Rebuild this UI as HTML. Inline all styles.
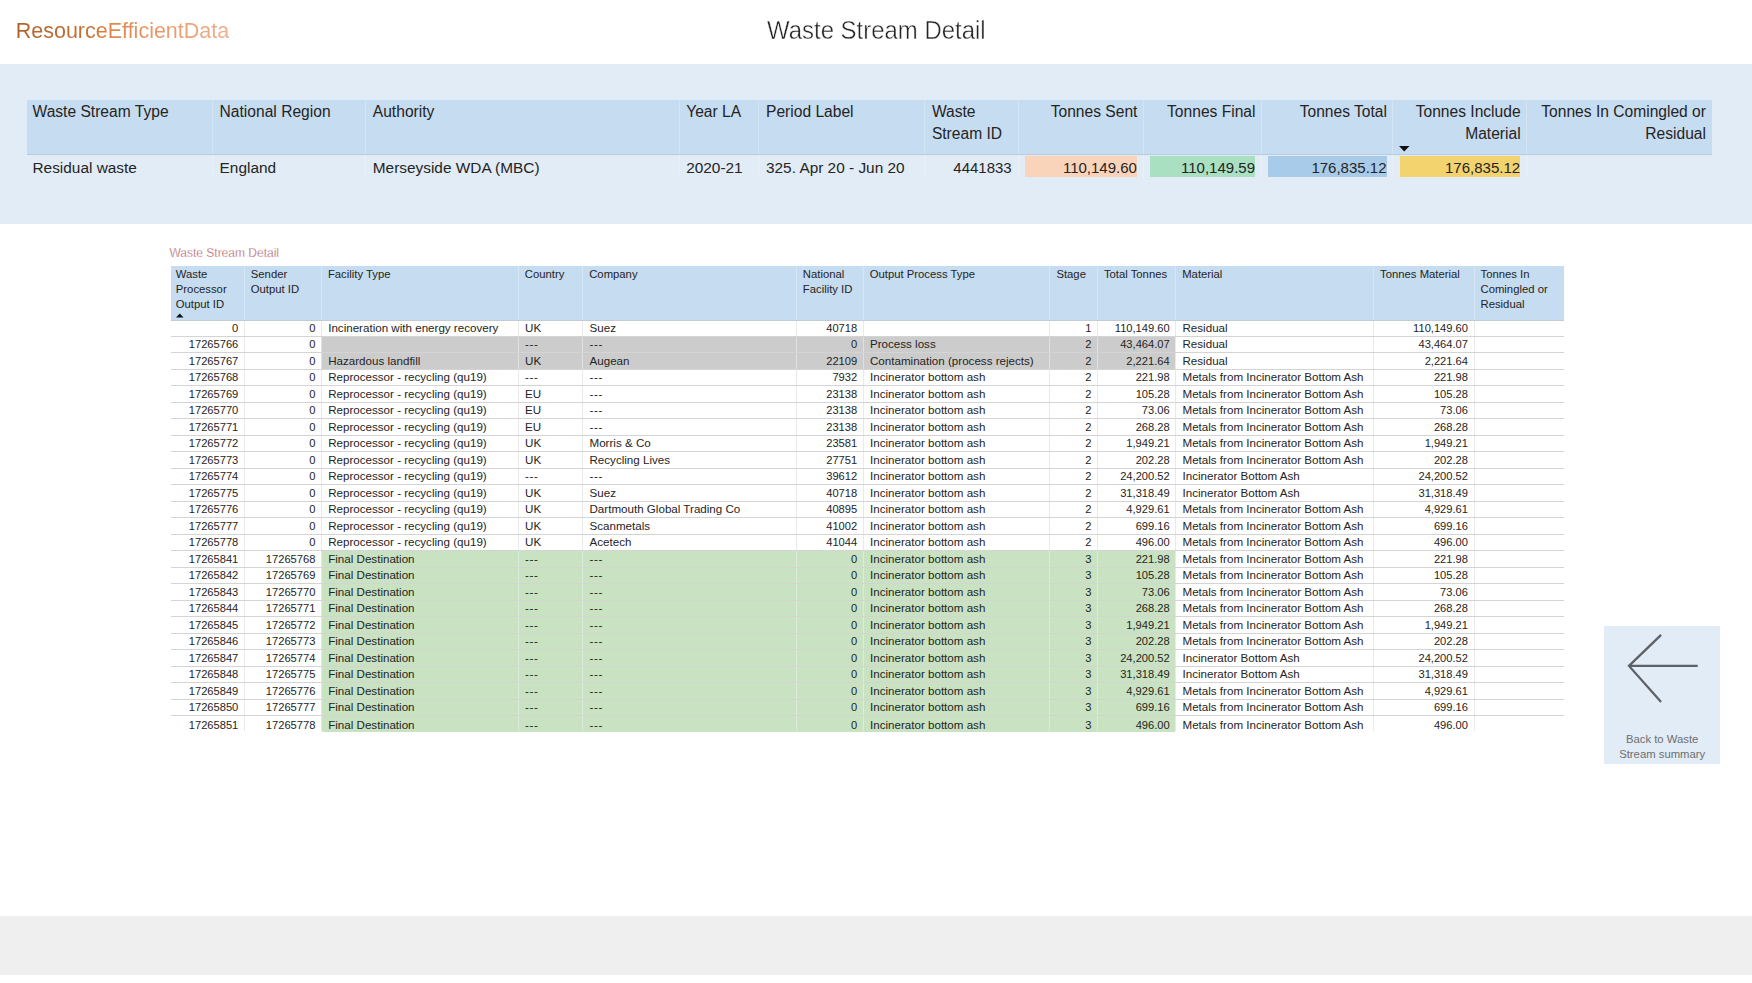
<!DOCTYPE html>
<html><head><meta charset="utf-8"><title>Waste Stream Detail</title>
<style>
html,body{margin:0;padding:0;}
body{width:1752px;height:983px;position:relative;overflow:hidden;background:#fff;font-family:"Liberation Sans", sans-serif;}
body>div{position:absolute;}
.t{white-space:nowrap;line-height:1;}
</style></head><body>
<div class="t" style="left:15.70px;top:21.00px;font-size:21.5px;color:#252423;background:linear-gradient(90deg,#b0612a 0%,#c77236 35%,#e3864c 45%,#e99a6c 70%,#ebb08e 100%);-webkit-background-clip:text;background-clip:text;color:transparent;">ResourceEfficientData</div>
<div class="t" style="left:766.80px;top:18.00px;font-size:25.5px;color:#252423;transform-origin:0 0;transform:scaleX(0.939);-webkit-text-stroke:0.45px #fff;">Waste Stream Detail</div>
<div style="left:0.00px;top:64.00px;width:1752.00px;height:160.00px;background:#e1ecf7;"></div>
<div style="left:27.00px;top:100.00px;width:1685.00px;height:55.00px;background:#c6dcf0;"></div>
<div style="left:27.00px;top:154.00px;width:1685.00px;height:1.00px;background:#b9cadb;"></div>
<div class="t" style="left:32.50px;top:104.00px;font-size:15.6px;color:#252423;">Waste Stream Type</div>
<div class="t" style="left:219.60px;top:104.00px;font-size:15.6px;color:#252423;">National Region</div>
<div class="t" style="left:372.80px;top:104.00px;font-size:15.6px;color:#252423;">Authority</div>
<div class="t" style="left:686.20px;top:104.00px;font-size:15.6px;color:#252423;">Year LA</div>
<div class="t" style="left:766.00px;top:104.00px;font-size:15.6px;color:#252423;">Period Label</div>
<div class="t" style="left:931.90px;top:104.00px;font-size:15.6px;color:#252423;">Waste</div>
<div class="t" style="left:931.90px;top:126.00px;font-size:15.6px;color:#252423;">Stream ID</div>
<div class="t" style="right:614.60px;top:104.00px;font-size:15.6px;color:#252423;">Tonnes Sent</div>
<div class="t" style="right:496.50px;top:104.00px;font-size:15.6px;color:#252423;">Tonnes Final</div>
<div class="t" style="right:365.00px;top:104.00px;font-size:15.6px;color:#252423;">Tonnes Total</div>
<div class="t" style="right:231.40px;top:104.00px;font-size:15.6px;color:#252423;">Tonnes Include</div>
<div class="t" style="right:231.40px;top:126.00px;font-size:15.6px;color:#252423;">Material</div>
<div class="t" style="right:46.00px;top:104.00px;font-size:15.6px;color:#252423;">Tonnes In Comingled or</div>
<div class="t" style="right:46.00px;top:126.00px;font-size:15.6px;color:#252423;">Residual</div>
<div class="t" style="left:32.50px;top:160.00px;font-size:15.4px;color:#252423;">Residual waste</div>
<div class="t" style="left:219.60px;top:160.00px;font-size:15.4px;color:#252423;">England</div>
<div class="t" style="left:372.80px;top:160.00px;font-size:15.4px;color:#252423;">Merseyside WDA (MBC)</div>
<div class="t" style="left:686.20px;top:160.00px;font-size:15.4px;color:#252423;">2020-21</div>
<div class="t" style="left:766.00px;top:160.00px;font-size:15.4px;color:#252423;">325. Apr 20 - Jun 20</div>
<div class="t" style="right:740.30px;top:160.00px;font-size:15px;color:#252423;">4441833</div>
<div style="left:1025.00px;top:156.00px;width:112.00px;height:21.00px;background:#f9d4bb;"></div>
<div class="t" style="right:615.10px;top:160.00px;font-size:15px;color:#252423;">110,149.60</div>
<div style="left:1150.00px;top:156.00px;width:105.00px;height:21.00px;background:#a8e0c1;"></div>
<div class="t" style="right:497.00px;top:160.00px;font-size:15px;color:#252423;">110,149.59</div>
<div style="left:1268.00px;top:156.00px;width:119.00px;height:21.00px;background:#a9cbea;"></div>
<div class="t" style="right:365.50px;top:160.00px;font-size:15px;color:#252423;">176,835.12</div>
<div style="left:1400.00px;top:156.00px;width:120.00px;height:21.00px;background:#f2d36e;"></div>
<div class="t" style="right:231.90px;top:160.00px;font-size:15px;color:#252423;">176,835.12</div>
<div class="t" style="right:46.50px;top:160.00px;font-size:15px;color:#252423;"></div>
<div style="left:212.00px;top:100.00px;width:1.00px;height:54.00px;background:#d3e4f3;"></div>
<div style="left:212.00px;top:155.00px;width:1.00px;height:23.00px;background:#e8f0f8;"></div>
<div style="left:365.00px;top:100.00px;width:1.00px;height:54.00px;background:#d3e4f3;"></div>
<div style="left:365.00px;top:155.00px;width:1.00px;height:23.00px;background:#e8f0f8;"></div>
<div style="left:679.00px;top:100.00px;width:1.00px;height:54.00px;background:#d3e4f3;"></div>
<div style="left:679.00px;top:155.00px;width:1.00px;height:23.00px;background:#e8f0f8;"></div>
<div style="left:758.00px;top:100.00px;width:1.00px;height:54.00px;background:#d3e4f3;"></div>
<div style="left:758.00px;top:155.00px;width:1.00px;height:23.00px;background:#e8f0f8;"></div>
<div style="left:924.00px;top:100.00px;width:1.00px;height:54.00px;background:#d3e4f3;"></div>
<div style="left:924.00px;top:155.00px;width:1.00px;height:23.00px;background:#e8f0f8;"></div>
<div style="left:1018.00px;top:100.00px;width:1.00px;height:54.00px;background:#d3e4f3;"></div>
<div style="left:1018.00px;top:155.00px;width:1.00px;height:23.00px;background:#e8f0f8;"></div>
<div style="left:1143.00px;top:100.00px;width:1.00px;height:54.00px;background:#d3e4f3;"></div>
<div style="left:1143.00px;top:155.00px;width:1.00px;height:23.00px;background:#e8f0f8;"></div>
<div style="left:1261.00px;top:100.00px;width:1.00px;height:54.00px;background:#d3e4f3;"></div>
<div style="left:1261.00px;top:155.00px;width:1.00px;height:23.00px;background:#e8f0f8;"></div>
<div style="left:1392.00px;top:100.00px;width:1.00px;height:54.00px;background:#d3e4f3;"></div>
<div style="left:1392.00px;top:155.00px;width:1.00px;height:23.00px;background:#e8f0f8;"></div>
<div style="left:1526.00px;top:100.00px;width:1.00px;height:54.00px;background:#d3e4f3;"></div>
<div style="left:1526.00px;top:155.00px;width:1.00px;height:23.00px;background:#e8f0f8;"></div>
<svg style="position:absolute;left:1399px;top:145.5px" width="11" height="6"><path d="M0 0H10.5L5.25 5.5Z" fill="#111"/></svg>
<div class="t" style="left:169.40px;top:247.00px;font-size:12px;color:#a84c55;-webkit-text-stroke:0.3px #fff;">Waste Stream Detail</div>
<div style="left:171.00px;top:266.00px;width:1393.00px;height:55.00px;background:#c6dcf0;"></div>
<div style="left:171.00px;top:320.00px;width:1393.00px;height:1.00px;background:#c3cbd3;"></div>
<div class="t" style="left:175.80px;top:269.00px;font-size:11.3px;color:#252423;">Waste</div>
<div class="t" style="left:175.80px;top:284.00px;font-size:11.3px;color:#252423;">Processor</div>
<div class="t" style="left:175.80px;top:299.00px;font-size:11.3px;color:#252423;">Output ID</div>
<div class="t" style="left:250.80px;top:269.00px;font-size:11.3px;color:#252423;">Sender</div>
<div class="t" style="left:250.80px;top:284.00px;font-size:11.3px;color:#252423;">Output ID</div>
<div class="t" style="left:327.90px;top:269.00px;font-size:11.3px;color:#252423;">Facility Type</div>
<div class="t" style="left:524.80px;top:269.00px;font-size:11.3px;color:#252423;">Country</div>
<div class="t" style="left:589.20px;top:269.00px;font-size:11.3px;color:#252423;">Company</div>
<div class="t" style="left:802.80px;top:269.00px;font-size:11.3px;color:#252423;">National</div>
<div class="t" style="left:802.80px;top:284.00px;font-size:11.3px;color:#252423;">Facility ID</div>
<div class="t" style="left:869.70px;top:269.00px;font-size:11.3px;color:#252423;">Output Process Type</div>
<div class="t" style="left:1056.40px;top:269.00px;font-size:11.3px;color:#252423;">Stage</div>
<div class="t" style="left:1103.90px;top:269.00px;font-size:11.3px;color:#252423;">Total Tonnes</div>
<div class="t" style="left:1182.20px;top:269.00px;font-size:11.3px;color:#252423;">Material</div>
<div class="t" style="left:1380.10px;top:269.00px;font-size:11.3px;color:#252423;">Tonnes Material</div>
<div class="t" style="left:1480.50px;top:269.00px;font-size:11.3px;color:#252423;">Tonnes In</div>
<div class="t" style="left:1480.50px;top:284.00px;font-size:11.3px;color:#252423;">Comingled or</div>
<div class="t" style="left:1480.50px;top:299.00px;font-size:11.3px;color:#252423;">Residual</div>
<div style="left:244.00px;top:266.00px;width:1.00px;height:54.00px;background:#d6e6f4;"></div>
<div style="left:321.00px;top:266.00px;width:1.00px;height:54.00px;background:#d6e6f4;"></div>
<div style="left:518.00px;top:266.00px;width:1.00px;height:54.00px;background:#d6e6f4;"></div>
<div style="left:582.00px;top:266.00px;width:1.00px;height:54.00px;background:#d6e6f4;"></div>
<div style="left:796.00px;top:266.00px;width:1.00px;height:54.00px;background:#d6e6f4;"></div>
<div style="left:863.00px;top:266.00px;width:1.00px;height:54.00px;background:#d6e6f4;"></div>
<div style="left:1049.00px;top:266.00px;width:1.00px;height:54.00px;background:#d6e6f4;"></div>
<div style="left:1097.00px;top:266.00px;width:1.00px;height:54.00px;background:#d6e6f4;"></div>
<div style="left:1175.00px;top:266.00px;width:1.00px;height:54.00px;background:#d6e6f4;"></div>
<div style="left:1373.00px;top:266.00px;width:1.00px;height:54.00px;background:#d6e6f4;"></div>
<div style="left:1474.00px;top:266.00px;width:1.00px;height:54.00px;background:#d6e6f4;"></div>
<svg style="position:absolute;left:175.5px;top:313px" width="8" height="5"><path d="M0 4.5H7.5L3.75 0.5Z" fill="#111"/></svg>
<div style="left:171.00px;top:321.00px;width:1393.00px;height:16.00px;background:#ffffff;"></div>
<div class="t" style="right:1513.70px;top:323.00px;font-size:11.15px;color:#252423;">0</div>
<div class="t" style="right:1436.60px;top:323.00px;font-size:11.15px;color:#252423;">0</div>
<div class="t" style="left:328.20px;top:322.00px;font-size:11.6px;color:#252423;">Incineration with energy recovery</div>
<div class="t" style="left:525.10px;top:322.00px;font-size:11.6px;color:#252423;">UK</div>
<div class="t" style="left:589.50px;top:322.00px;font-size:11.6px;color:#252423;">Suez</div>
<div class="t" style="right:894.80px;top:323.00px;font-size:11.15px;color:#252423;">40718</div>
<div class="t" style="right:660.60px;top:323.00px;font-size:11.15px;color:#252423;">1</div>
<div class="t" style="right:582.30px;top:323.00px;font-size:11.15px;color:#252423;">110,149.60</div>
<div class="t" style="left:1182.50px;top:322.00px;font-size:11.6px;color:#252423;">Residual</div>
<div class="t" style="right:284.00px;top:323.00px;font-size:11.15px;color:#252423;">110,149.60</div>
<div style="left:171.00px;top:336.00px;width:1393.00px;height:1.00px;background:#d4d4d4;"></div>
<div style="left:244.00px;top:321.00px;width:1.00px;height:15.00px;background:#e9e9e9;"></div>
<div style="left:321.00px;top:321.00px;width:1.00px;height:15.00px;background:#e9e9e9;"></div>
<div style="left:518.00px;top:321.00px;width:1.00px;height:15.00px;background:#e9e9e9;"></div>
<div style="left:582.00px;top:321.00px;width:1.00px;height:15.00px;background:#e9e9e9;"></div>
<div style="left:796.00px;top:321.00px;width:1.00px;height:15.00px;background:#e9e9e9;"></div>
<div style="left:863.00px;top:321.00px;width:1.00px;height:15.00px;background:#e9e9e9;"></div>
<div style="left:1049.00px;top:321.00px;width:1.00px;height:15.00px;background:#e9e9e9;"></div>
<div style="left:1097.00px;top:321.00px;width:1.00px;height:15.00px;background:#e9e9e9;"></div>
<div style="left:1175.00px;top:321.00px;width:1.00px;height:15.00px;background:#e9e9e9;"></div>
<div style="left:1373.00px;top:321.00px;width:1.00px;height:15.00px;background:#e9e9e9;"></div>
<div style="left:1474.00px;top:321.00px;width:1.00px;height:15.00px;background:#e9e9e9;"></div>
<div style="left:171.00px;top:337.00px;width:1393.00px;height:16.00px;background:#ffffff;"></div>
<div style="left:322.00px;top:337.00px;width:853.00px;height:16.00px;background:#cccccc;"></div>
<div class="t" style="right:1513.70px;top:339.00px;font-size:11.15px;color:#252423;">17265766</div>
<div class="t" style="right:1436.60px;top:339.00px;font-size:11.15px;color:#252423;">0</div>
<div class="t" style="left:525.10px;top:338.00px;font-size:11.6px;color:#252423;letter-spacing:0.6px;">---</div>
<div class="t" style="left:589.50px;top:338.00px;font-size:11.6px;color:#252423;letter-spacing:0.6px;">---</div>
<div class="t" style="right:894.80px;top:339.00px;font-size:11.15px;color:#252423;">0</div>
<div class="t" style="left:870.00px;top:338.00px;font-size:11.6px;color:#252423;">Process loss</div>
<div class="t" style="right:660.60px;top:339.00px;font-size:11.15px;color:#252423;">2</div>
<div class="t" style="right:582.30px;top:339.00px;font-size:11.15px;color:#252423;">43,464.07</div>
<div class="t" style="left:1182.50px;top:338.00px;font-size:11.6px;color:#252423;">Residual</div>
<div class="t" style="right:284.00px;top:339.00px;font-size:11.15px;color:#252423;">43,464.07</div>
<div style="left:171.00px;top:352.00px;width:1393.00px;height:1.00px;background:#d4d4d4;"></div>
<div style="left:244.00px;top:337.00px;width:1.00px;height:15.00px;background:#e9e9e9;"></div>
<div style="left:321.00px;top:337.00px;width:1.00px;height:15.00px;background:#e0e0e0;"></div>
<div style="left:518.00px;top:337.00px;width:1.00px;height:15.00px;background:#e0e0e0;"></div>
<div style="left:582.00px;top:337.00px;width:1.00px;height:15.00px;background:#e0e0e0;"></div>
<div style="left:796.00px;top:337.00px;width:1.00px;height:15.00px;background:#e0e0e0;"></div>
<div style="left:863.00px;top:337.00px;width:1.00px;height:15.00px;background:#e0e0e0;"></div>
<div style="left:1049.00px;top:337.00px;width:1.00px;height:15.00px;background:#e0e0e0;"></div>
<div style="left:1097.00px;top:337.00px;width:1.00px;height:15.00px;background:#e0e0e0;"></div>
<div style="left:1175.00px;top:337.00px;width:1.00px;height:15.00px;background:#e9e9e9;"></div>
<div style="left:1373.00px;top:337.00px;width:1.00px;height:15.00px;background:#e9e9e9;"></div>
<div style="left:1474.00px;top:337.00px;width:1.00px;height:15.00px;background:#e9e9e9;"></div>
<div style="left:171.00px;top:353.00px;width:1393.00px;height:17.00px;background:#ffffff;"></div>
<div style="left:322.00px;top:353.00px;width:853.00px;height:17.00px;background:#cccccc;"></div>
<div class="t" style="right:1513.70px;top:356.00px;font-size:11.15px;color:#252423;">17265767</div>
<div class="t" style="right:1436.60px;top:356.00px;font-size:11.15px;color:#252423;">0</div>
<div class="t" style="left:328.20px;top:355.00px;font-size:11.6px;color:#252423;">Hazardous landfill</div>
<div class="t" style="left:525.10px;top:355.00px;font-size:11.6px;color:#252423;">UK</div>
<div class="t" style="left:589.50px;top:355.00px;font-size:11.6px;color:#252423;">Augean</div>
<div class="t" style="right:894.80px;top:356.00px;font-size:11.15px;color:#252423;">22109</div>
<div class="t" style="left:870.00px;top:355.00px;font-size:11.6px;color:#252423;">Contamination (process rejects)</div>
<div class="t" style="right:660.60px;top:356.00px;font-size:11.15px;color:#252423;">2</div>
<div class="t" style="right:582.30px;top:356.00px;font-size:11.15px;color:#252423;">2,221.64</div>
<div class="t" style="left:1182.50px;top:355.00px;font-size:11.6px;color:#252423;">Residual</div>
<div class="t" style="right:284.00px;top:356.00px;font-size:11.15px;color:#252423;">2,221.64</div>
<div style="left:171.00px;top:369.00px;width:1393.00px;height:1.00px;background:#d4d4d4;"></div>
<div style="left:244.00px;top:353.00px;width:1.00px;height:16.00px;background:#e9e9e9;"></div>
<div style="left:321.00px;top:353.00px;width:1.00px;height:16.00px;background:#e0e0e0;"></div>
<div style="left:518.00px;top:353.00px;width:1.00px;height:16.00px;background:#e0e0e0;"></div>
<div style="left:582.00px;top:353.00px;width:1.00px;height:16.00px;background:#e0e0e0;"></div>
<div style="left:796.00px;top:353.00px;width:1.00px;height:16.00px;background:#e0e0e0;"></div>
<div style="left:863.00px;top:353.00px;width:1.00px;height:16.00px;background:#e0e0e0;"></div>
<div style="left:1049.00px;top:353.00px;width:1.00px;height:16.00px;background:#e0e0e0;"></div>
<div style="left:1097.00px;top:353.00px;width:1.00px;height:16.00px;background:#e0e0e0;"></div>
<div style="left:1175.00px;top:353.00px;width:1.00px;height:16.00px;background:#e9e9e9;"></div>
<div style="left:1373.00px;top:353.00px;width:1.00px;height:16.00px;background:#e9e9e9;"></div>
<div style="left:1474.00px;top:353.00px;width:1.00px;height:16.00px;background:#e9e9e9;"></div>
<div style="left:171.00px;top:370.00px;width:1393.00px;height:16.00px;background:#ffffff;"></div>
<div class="t" style="right:1513.70px;top:372.00px;font-size:11.15px;color:#252423;">17265768</div>
<div class="t" style="right:1436.60px;top:372.00px;font-size:11.15px;color:#252423;">0</div>
<div class="t" style="left:328.20px;top:371.00px;font-size:11.6px;color:#252423;">Reprocessor - recycling (qu19)</div>
<div class="t" style="left:525.10px;top:371.00px;font-size:11.6px;color:#252423;letter-spacing:0.6px;">---</div>
<div class="t" style="left:589.50px;top:371.00px;font-size:11.6px;color:#252423;letter-spacing:0.6px;">---</div>
<div class="t" style="right:894.80px;top:372.00px;font-size:11.15px;color:#252423;">7932</div>
<div class="t" style="left:870.00px;top:371.00px;font-size:11.6px;color:#252423;">Incinerator bottom ash</div>
<div class="t" style="right:660.60px;top:372.00px;font-size:11.15px;color:#252423;">2</div>
<div class="t" style="right:582.30px;top:372.00px;font-size:11.15px;color:#252423;">221.98</div>
<div class="t" style="left:1182.50px;top:371.00px;font-size:11.6px;color:#252423;">Metals from Incinerator Bottom Ash</div>
<div class="t" style="right:284.00px;top:372.00px;font-size:11.15px;color:#252423;">221.98</div>
<div style="left:171.00px;top:385.00px;width:1393.00px;height:1.00px;background:#d4d4d4;"></div>
<div style="left:244.00px;top:370.00px;width:1.00px;height:15.00px;background:#e9e9e9;"></div>
<div style="left:321.00px;top:370.00px;width:1.00px;height:15.00px;background:#e9e9e9;"></div>
<div style="left:518.00px;top:370.00px;width:1.00px;height:15.00px;background:#e9e9e9;"></div>
<div style="left:582.00px;top:370.00px;width:1.00px;height:15.00px;background:#e9e9e9;"></div>
<div style="left:796.00px;top:370.00px;width:1.00px;height:15.00px;background:#e9e9e9;"></div>
<div style="left:863.00px;top:370.00px;width:1.00px;height:15.00px;background:#e9e9e9;"></div>
<div style="left:1049.00px;top:370.00px;width:1.00px;height:15.00px;background:#e9e9e9;"></div>
<div style="left:1097.00px;top:370.00px;width:1.00px;height:15.00px;background:#e9e9e9;"></div>
<div style="left:1175.00px;top:370.00px;width:1.00px;height:15.00px;background:#e9e9e9;"></div>
<div style="left:1373.00px;top:370.00px;width:1.00px;height:15.00px;background:#e9e9e9;"></div>
<div style="left:1474.00px;top:370.00px;width:1.00px;height:15.00px;background:#e9e9e9;"></div>
<div style="left:171.00px;top:386.00px;width:1393.00px;height:17.00px;background:#ffffff;"></div>
<div class="t" style="right:1513.70px;top:389.00px;font-size:11.15px;color:#252423;">17265769</div>
<div class="t" style="right:1436.60px;top:389.00px;font-size:11.15px;color:#252423;">0</div>
<div class="t" style="left:328.20px;top:388.00px;font-size:11.6px;color:#252423;">Reprocessor - recycling (qu19)</div>
<div class="t" style="left:525.10px;top:388.00px;font-size:11.6px;color:#252423;">EU</div>
<div class="t" style="left:589.50px;top:388.00px;font-size:11.6px;color:#252423;letter-spacing:0.6px;">---</div>
<div class="t" style="right:894.80px;top:389.00px;font-size:11.15px;color:#252423;">23138</div>
<div class="t" style="left:870.00px;top:388.00px;font-size:11.6px;color:#252423;">Incinerator bottom ash</div>
<div class="t" style="right:660.60px;top:389.00px;font-size:11.15px;color:#252423;">2</div>
<div class="t" style="right:582.30px;top:389.00px;font-size:11.15px;color:#252423;">105.28</div>
<div class="t" style="left:1182.50px;top:388.00px;font-size:11.6px;color:#252423;">Metals from Incinerator Bottom Ash</div>
<div class="t" style="right:284.00px;top:389.00px;font-size:11.15px;color:#252423;">105.28</div>
<div style="left:171.00px;top:402.00px;width:1393.00px;height:1.00px;background:#d4d4d4;"></div>
<div style="left:244.00px;top:386.00px;width:1.00px;height:16.00px;background:#e9e9e9;"></div>
<div style="left:321.00px;top:386.00px;width:1.00px;height:16.00px;background:#e9e9e9;"></div>
<div style="left:518.00px;top:386.00px;width:1.00px;height:16.00px;background:#e9e9e9;"></div>
<div style="left:582.00px;top:386.00px;width:1.00px;height:16.00px;background:#e9e9e9;"></div>
<div style="left:796.00px;top:386.00px;width:1.00px;height:16.00px;background:#e9e9e9;"></div>
<div style="left:863.00px;top:386.00px;width:1.00px;height:16.00px;background:#e9e9e9;"></div>
<div style="left:1049.00px;top:386.00px;width:1.00px;height:16.00px;background:#e9e9e9;"></div>
<div style="left:1097.00px;top:386.00px;width:1.00px;height:16.00px;background:#e9e9e9;"></div>
<div style="left:1175.00px;top:386.00px;width:1.00px;height:16.00px;background:#e9e9e9;"></div>
<div style="left:1373.00px;top:386.00px;width:1.00px;height:16.00px;background:#e9e9e9;"></div>
<div style="left:1474.00px;top:386.00px;width:1.00px;height:16.00px;background:#e9e9e9;"></div>
<div style="left:171.00px;top:403.00px;width:1393.00px;height:16.00px;background:#ffffff;"></div>
<div class="t" style="right:1513.70px;top:405.00px;font-size:11.15px;color:#252423;">17265770</div>
<div class="t" style="right:1436.60px;top:405.00px;font-size:11.15px;color:#252423;">0</div>
<div class="t" style="left:328.20px;top:404.00px;font-size:11.6px;color:#252423;">Reprocessor - recycling (qu19)</div>
<div class="t" style="left:525.10px;top:404.00px;font-size:11.6px;color:#252423;">EU</div>
<div class="t" style="left:589.50px;top:404.00px;font-size:11.6px;color:#252423;letter-spacing:0.6px;">---</div>
<div class="t" style="right:894.80px;top:405.00px;font-size:11.15px;color:#252423;">23138</div>
<div class="t" style="left:870.00px;top:404.00px;font-size:11.6px;color:#252423;">Incinerator bottom ash</div>
<div class="t" style="right:660.60px;top:405.00px;font-size:11.15px;color:#252423;">2</div>
<div class="t" style="right:582.30px;top:405.00px;font-size:11.15px;color:#252423;">73.06</div>
<div class="t" style="left:1182.50px;top:404.00px;font-size:11.6px;color:#252423;">Metals from Incinerator Bottom Ash</div>
<div class="t" style="right:284.00px;top:405.00px;font-size:11.15px;color:#252423;">73.06</div>
<div style="left:171.00px;top:418.00px;width:1393.00px;height:1.00px;background:#d4d4d4;"></div>
<div style="left:244.00px;top:403.00px;width:1.00px;height:15.00px;background:#e9e9e9;"></div>
<div style="left:321.00px;top:403.00px;width:1.00px;height:15.00px;background:#e9e9e9;"></div>
<div style="left:518.00px;top:403.00px;width:1.00px;height:15.00px;background:#e9e9e9;"></div>
<div style="left:582.00px;top:403.00px;width:1.00px;height:15.00px;background:#e9e9e9;"></div>
<div style="left:796.00px;top:403.00px;width:1.00px;height:15.00px;background:#e9e9e9;"></div>
<div style="left:863.00px;top:403.00px;width:1.00px;height:15.00px;background:#e9e9e9;"></div>
<div style="left:1049.00px;top:403.00px;width:1.00px;height:15.00px;background:#e9e9e9;"></div>
<div style="left:1097.00px;top:403.00px;width:1.00px;height:15.00px;background:#e9e9e9;"></div>
<div style="left:1175.00px;top:403.00px;width:1.00px;height:15.00px;background:#e9e9e9;"></div>
<div style="left:1373.00px;top:403.00px;width:1.00px;height:15.00px;background:#e9e9e9;"></div>
<div style="left:1474.00px;top:403.00px;width:1.00px;height:15.00px;background:#e9e9e9;"></div>
<div style="left:171.00px;top:419.00px;width:1393.00px;height:17.00px;background:#ffffff;"></div>
<div class="t" style="right:1513.70px;top:422.00px;font-size:11.15px;color:#252423;">17265771</div>
<div class="t" style="right:1436.60px;top:422.00px;font-size:11.15px;color:#252423;">0</div>
<div class="t" style="left:328.20px;top:421.00px;font-size:11.6px;color:#252423;">Reprocessor - recycling (qu19)</div>
<div class="t" style="left:525.10px;top:421.00px;font-size:11.6px;color:#252423;">EU</div>
<div class="t" style="left:589.50px;top:421.00px;font-size:11.6px;color:#252423;letter-spacing:0.6px;">---</div>
<div class="t" style="right:894.80px;top:422.00px;font-size:11.15px;color:#252423;">23138</div>
<div class="t" style="left:870.00px;top:421.00px;font-size:11.6px;color:#252423;">Incinerator bottom ash</div>
<div class="t" style="right:660.60px;top:422.00px;font-size:11.15px;color:#252423;">2</div>
<div class="t" style="right:582.30px;top:422.00px;font-size:11.15px;color:#252423;">268.28</div>
<div class="t" style="left:1182.50px;top:421.00px;font-size:11.6px;color:#252423;">Metals from Incinerator Bottom Ash</div>
<div class="t" style="right:284.00px;top:422.00px;font-size:11.15px;color:#252423;">268.28</div>
<div style="left:171.00px;top:435.00px;width:1393.00px;height:1.00px;background:#d4d4d4;"></div>
<div style="left:244.00px;top:419.00px;width:1.00px;height:16.00px;background:#e9e9e9;"></div>
<div style="left:321.00px;top:419.00px;width:1.00px;height:16.00px;background:#e9e9e9;"></div>
<div style="left:518.00px;top:419.00px;width:1.00px;height:16.00px;background:#e9e9e9;"></div>
<div style="left:582.00px;top:419.00px;width:1.00px;height:16.00px;background:#e9e9e9;"></div>
<div style="left:796.00px;top:419.00px;width:1.00px;height:16.00px;background:#e9e9e9;"></div>
<div style="left:863.00px;top:419.00px;width:1.00px;height:16.00px;background:#e9e9e9;"></div>
<div style="left:1049.00px;top:419.00px;width:1.00px;height:16.00px;background:#e9e9e9;"></div>
<div style="left:1097.00px;top:419.00px;width:1.00px;height:16.00px;background:#e9e9e9;"></div>
<div style="left:1175.00px;top:419.00px;width:1.00px;height:16.00px;background:#e9e9e9;"></div>
<div style="left:1373.00px;top:419.00px;width:1.00px;height:16.00px;background:#e9e9e9;"></div>
<div style="left:1474.00px;top:419.00px;width:1.00px;height:16.00px;background:#e9e9e9;"></div>
<div style="left:171.00px;top:436.00px;width:1393.00px;height:16.00px;background:#ffffff;"></div>
<div class="t" style="right:1513.70px;top:438.00px;font-size:11.15px;color:#252423;">17265772</div>
<div class="t" style="right:1436.60px;top:438.00px;font-size:11.15px;color:#252423;">0</div>
<div class="t" style="left:328.20px;top:437.00px;font-size:11.6px;color:#252423;">Reprocessor - recycling (qu19)</div>
<div class="t" style="left:525.10px;top:437.00px;font-size:11.6px;color:#252423;">UK</div>
<div class="t" style="left:589.50px;top:437.00px;font-size:11.6px;color:#252423;">Morris &amp; Co</div>
<div class="t" style="right:894.80px;top:438.00px;font-size:11.15px;color:#252423;">23581</div>
<div class="t" style="left:870.00px;top:437.00px;font-size:11.6px;color:#252423;">Incinerator bottom ash</div>
<div class="t" style="right:660.60px;top:438.00px;font-size:11.15px;color:#252423;">2</div>
<div class="t" style="right:582.30px;top:438.00px;font-size:11.15px;color:#252423;">1,949.21</div>
<div class="t" style="left:1182.50px;top:437.00px;font-size:11.6px;color:#252423;">Metals from Incinerator Bottom Ash</div>
<div class="t" style="right:284.00px;top:438.00px;font-size:11.15px;color:#252423;">1,949.21</div>
<div style="left:171.00px;top:451.00px;width:1393.00px;height:1.00px;background:#d4d4d4;"></div>
<div style="left:244.00px;top:436.00px;width:1.00px;height:15.00px;background:#e9e9e9;"></div>
<div style="left:321.00px;top:436.00px;width:1.00px;height:15.00px;background:#e9e9e9;"></div>
<div style="left:518.00px;top:436.00px;width:1.00px;height:15.00px;background:#e9e9e9;"></div>
<div style="left:582.00px;top:436.00px;width:1.00px;height:15.00px;background:#e9e9e9;"></div>
<div style="left:796.00px;top:436.00px;width:1.00px;height:15.00px;background:#e9e9e9;"></div>
<div style="left:863.00px;top:436.00px;width:1.00px;height:15.00px;background:#e9e9e9;"></div>
<div style="left:1049.00px;top:436.00px;width:1.00px;height:15.00px;background:#e9e9e9;"></div>
<div style="left:1097.00px;top:436.00px;width:1.00px;height:15.00px;background:#e9e9e9;"></div>
<div style="left:1175.00px;top:436.00px;width:1.00px;height:15.00px;background:#e9e9e9;"></div>
<div style="left:1373.00px;top:436.00px;width:1.00px;height:15.00px;background:#e9e9e9;"></div>
<div style="left:1474.00px;top:436.00px;width:1.00px;height:15.00px;background:#e9e9e9;"></div>
<div style="left:171.00px;top:452.00px;width:1393.00px;height:17.00px;background:#ffffff;"></div>
<div class="t" style="right:1513.70px;top:455.00px;font-size:11.15px;color:#252423;">17265773</div>
<div class="t" style="right:1436.60px;top:455.00px;font-size:11.15px;color:#252423;">0</div>
<div class="t" style="left:328.20px;top:454.00px;font-size:11.6px;color:#252423;">Reprocessor - recycling (qu19)</div>
<div class="t" style="left:525.10px;top:454.00px;font-size:11.6px;color:#252423;">UK</div>
<div class="t" style="left:589.50px;top:454.00px;font-size:11.6px;color:#252423;">Recycling Lives</div>
<div class="t" style="right:894.80px;top:455.00px;font-size:11.15px;color:#252423;">27751</div>
<div class="t" style="left:870.00px;top:454.00px;font-size:11.6px;color:#252423;">Incinerator bottom ash</div>
<div class="t" style="right:660.60px;top:455.00px;font-size:11.15px;color:#252423;">2</div>
<div class="t" style="right:582.30px;top:455.00px;font-size:11.15px;color:#252423;">202.28</div>
<div class="t" style="left:1182.50px;top:454.00px;font-size:11.6px;color:#252423;">Metals from Incinerator Bottom Ash</div>
<div class="t" style="right:284.00px;top:455.00px;font-size:11.15px;color:#252423;">202.28</div>
<div style="left:171.00px;top:468.00px;width:1393.00px;height:1.00px;background:#d4d4d4;"></div>
<div style="left:244.00px;top:452.00px;width:1.00px;height:16.00px;background:#e9e9e9;"></div>
<div style="left:321.00px;top:452.00px;width:1.00px;height:16.00px;background:#e9e9e9;"></div>
<div style="left:518.00px;top:452.00px;width:1.00px;height:16.00px;background:#e9e9e9;"></div>
<div style="left:582.00px;top:452.00px;width:1.00px;height:16.00px;background:#e9e9e9;"></div>
<div style="left:796.00px;top:452.00px;width:1.00px;height:16.00px;background:#e9e9e9;"></div>
<div style="left:863.00px;top:452.00px;width:1.00px;height:16.00px;background:#e9e9e9;"></div>
<div style="left:1049.00px;top:452.00px;width:1.00px;height:16.00px;background:#e9e9e9;"></div>
<div style="left:1097.00px;top:452.00px;width:1.00px;height:16.00px;background:#e9e9e9;"></div>
<div style="left:1175.00px;top:452.00px;width:1.00px;height:16.00px;background:#e9e9e9;"></div>
<div style="left:1373.00px;top:452.00px;width:1.00px;height:16.00px;background:#e9e9e9;"></div>
<div style="left:1474.00px;top:452.00px;width:1.00px;height:16.00px;background:#e9e9e9;"></div>
<div style="left:171.00px;top:469.00px;width:1393.00px;height:16.00px;background:#ffffff;"></div>
<div class="t" style="right:1513.70px;top:471.00px;font-size:11.15px;color:#252423;">17265774</div>
<div class="t" style="right:1436.60px;top:471.00px;font-size:11.15px;color:#252423;">0</div>
<div class="t" style="left:328.20px;top:470.00px;font-size:11.6px;color:#252423;">Reprocessor - recycling (qu19)</div>
<div class="t" style="left:525.10px;top:470.00px;font-size:11.6px;color:#252423;letter-spacing:0.6px;">---</div>
<div class="t" style="left:589.50px;top:470.00px;font-size:11.6px;color:#252423;letter-spacing:0.6px;">---</div>
<div class="t" style="right:894.80px;top:471.00px;font-size:11.15px;color:#252423;">39612</div>
<div class="t" style="left:870.00px;top:470.00px;font-size:11.6px;color:#252423;">Incinerator bottom ash</div>
<div class="t" style="right:660.60px;top:471.00px;font-size:11.15px;color:#252423;">2</div>
<div class="t" style="right:582.30px;top:471.00px;font-size:11.15px;color:#252423;">24,200.52</div>
<div class="t" style="left:1182.50px;top:470.00px;font-size:11.6px;color:#252423;">Incinerator Bottom Ash</div>
<div class="t" style="right:284.00px;top:471.00px;font-size:11.15px;color:#252423;">24,200.52</div>
<div style="left:171.00px;top:484.00px;width:1393.00px;height:1.00px;background:#d4d4d4;"></div>
<div style="left:244.00px;top:469.00px;width:1.00px;height:15.00px;background:#e9e9e9;"></div>
<div style="left:321.00px;top:469.00px;width:1.00px;height:15.00px;background:#e9e9e9;"></div>
<div style="left:518.00px;top:469.00px;width:1.00px;height:15.00px;background:#e9e9e9;"></div>
<div style="left:582.00px;top:469.00px;width:1.00px;height:15.00px;background:#e9e9e9;"></div>
<div style="left:796.00px;top:469.00px;width:1.00px;height:15.00px;background:#e9e9e9;"></div>
<div style="left:863.00px;top:469.00px;width:1.00px;height:15.00px;background:#e9e9e9;"></div>
<div style="left:1049.00px;top:469.00px;width:1.00px;height:15.00px;background:#e9e9e9;"></div>
<div style="left:1097.00px;top:469.00px;width:1.00px;height:15.00px;background:#e9e9e9;"></div>
<div style="left:1175.00px;top:469.00px;width:1.00px;height:15.00px;background:#e9e9e9;"></div>
<div style="left:1373.00px;top:469.00px;width:1.00px;height:15.00px;background:#e9e9e9;"></div>
<div style="left:1474.00px;top:469.00px;width:1.00px;height:15.00px;background:#e9e9e9;"></div>
<div style="left:171.00px;top:485.00px;width:1393.00px;height:17.00px;background:#ffffff;"></div>
<div class="t" style="right:1513.70px;top:488.00px;font-size:11.15px;color:#252423;">17265775</div>
<div class="t" style="right:1436.60px;top:488.00px;font-size:11.15px;color:#252423;">0</div>
<div class="t" style="left:328.20px;top:487.00px;font-size:11.6px;color:#252423;">Reprocessor - recycling (qu19)</div>
<div class="t" style="left:525.10px;top:487.00px;font-size:11.6px;color:#252423;">UK</div>
<div class="t" style="left:589.50px;top:487.00px;font-size:11.6px;color:#252423;">Suez</div>
<div class="t" style="right:894.80px;top:488.00px;font-size:11.15px;color:#252423;">40718</div>
<div class="t" style="left:870.00px;top:487.00px;font-size:11.6px;color:#252423;">Incinerator bottom ash</div>
<div class="t" style="right:660.60px;top:488.00px;font-size:11.15px;color:#252423;">2</div>
<div class="t" style="right:582.30px;top:488.00px;font-size:11.15px;color:#252423;">31,318.49</div>
<div class="t" style="left:1182.50px;top:487.00px;font-size:11.6px;color:#252423;">Incinerator Bottom Ash</div>
<div class="t" style="right:284.00px;top:488.00px;font-size:11.15px;color:#252423;">31,318.49</div>
<div style="left:171.00px;top:501.00px;width:1393.00px;height:1.00px;background:#d4d4d4;"></div>
<div style="left:244.00px;top:485.00px;width:1.00px;height:16.00px;background:#e9e9e9;"></div>
<div style="left:321.00px;top:485.00px;width:1.00px;height:16.00px;background:#e9e9e9;"></div>
<div style="left:518.00px;top:485.00px;width:1.00px;height:16.00px;background:#e9e9e9;"></div>
<div style="left:582.00px;top:485.00px;width:1.00px;height:16.00px;background:#e9e9e9;"></div>
<div style="left:796.00px;top:485.00px;width:1.00px;height:16.00px;background:#e9e9e9;"></div>
<div style="left:863.00px;top:485.00px;width:1.00px;height:16.00px;background:#e9e9e9;"></div>
<div style="left:1049.00px;top:485.00px;width:1.00px;height:16.00px;background:#e9e9e9;"></div>
<div style="left:1097.00px;top:485.00px;width:1.00px;height:16.00px;background:#e9e9e9;"></div>
<div style="left:1175.00px;top:485.00px;width:1.00px;height:16.00px;background:#e9e9e9;"></div>
<div style="left:1373.00px;top:485.00px;width:1.00px;height:16.00px;background:#e9e9e9;"></div>
<div style="left:1474.00px;top:485.00px;width:1.00px;height:16.00px;background:#e9e9e9;"></div>
<div style="left:171.00px;top:502.00px;width:1393.00px;height:16.00px;background:#ffffff;"></div>
<div class="t" style="right:1513.70px;top:504.00px;font-size:11.15px;color:#252423;">17265776</div>
<div class="t" style="right:1436.60px;top:504.00px;font-size:11.15px;color:#252423;">0</div>
<div class="t" style="left:328.20px;top:503.00px;font-size:11.6px;color:#252423;">Reprocessor - recycling (qu19)</div>
<div class="t" style="left:525.10px;top:503.00px;font-size:11.6px;color:#252423;">UK</div>
<div class="t" style="left:589.50px;top:503.00px;font-size:11.6px;color:#252423;">Dartmouth Global Trading Co</div>
<div class="t" style="right:894.80px;top:504.00px;font-size:11.15px;color:#252423;">40895</div>
<div class="t" style="left:870.00px;top:503.00px;font-size:11.6px;color:#252423;">Incinerator bottom ash</div>
<div class="t" style="right:660.60px;top:504.00px;font-size:11.15px;color:#252423;">2</div>
<div class="t" style="right:582.30px;top:504.00px;font-size:11.15px;color:#252423;">4,929.61</div>
<div class="t" style="left:1182.50px;top:503.00px;font-size:11.6px;color:#252423;">Metals from Incinerator Bottom Ash</div>
<div class="t" style="right:284.00px;top:504.00px;font-size:11.15px;color:#252423;">4,929.61</div>
<div style="left:171.00px;top:517.00px;width:1393.00px;height:1.00px;background:#d4d4d4;"></div>
<div style="left:244.00px;top:502.00px;width:1.00px;height:15.00px;background:#e9e9e9;"></div>
<div style="left:321.00px;top:502.00px;width:1.00px;height:15.00px;background:#e9e9e9;"></div>
<div style="left:518.00px;top:502.00px;width:1.00px;height:15.00px;background:#e9e9e9;"></div>
<div style="left:582.00px;top:502.00px;width:1.00px;height:15.00px;background:#e9e9e9;"></div>
<div style="left:796.00px;top:502.00px;width:1.00px;height:15.00px;background:#e9e9e9;"></div>
<div style="left:863.00px;top:502.00px;width:1.00px;height:15.00px;background:#e9e9e9;"></div>
<div style="left:1049.00px;top:502.00px;width:1.00px;height:15.00px;background:#e9e9e9;"></div>
<div style="left:1097.00px;top:502.00px;width:1.00px;height:15.00px;background:#e9e9e9;"></div>
<div style="left:1175.00px;top:502.00px;width:1.00px;height:15.00px;background:#e9e9e9;"></div>
<div style="left:1373.00px;top:502.00px;width:1.00px;height:15.00px;background:#e9e9e9;"></div>
<div style="left:1474.00px;top:502.00px;width:1.00px;height:15.00px;background:#e9e9e9;"></div>
<div style="left:171.00px;top:518.00px;width:1393.00px;height:17.00px;background:#ffffff;"></div>
<div class="t" style="right:1513.70px;top:521.00px;font-size:11.15px;color:#252423;">17265777</div>
<div class="t" style="right:1436.60px;top:521.00px;font-size:11.15px;color:#252423;">0</div>
<div class="t" style="left:328.20px;top:520.00px;font-size:11.6px;color:#252423;">Reprocessor - recycling (qu19)</div>
<div class="t" style="left:525.10px;top:520.00px;font-size:11.6px;color:#252423;">UK</div>
<div class="t" style="left:589.50px;top:520.00px;font-size:11.6px;color:#252423;">Scanmetals</div>
<div class="t" style="right:894.80px;top:521.00px;font-size:11.15px;color:#252423;">41002</div>
<div class="t" style="left:870.00px;top:520.00px;font-size:11.6px;color:#252423;">Incinerator bottom ash</div>
<div class="t" style="right:660.60px;top:521.00px;font-size:11.15px;color:#252423;">2</div>
<div class="t" style="right:582.30px;top:521.00px;font-size:11.15px;color:#252423;">699.16</div>
<div class="t" style="left:1182.50px;top:520.00px;font-size:11.6px;color:#252423;">Metals from Incinerator Bottom Ash</div>
<div class="t" style="right:284.00px;top:521.00px;font-size:11.15px;color:#252423;">699.16</div>
<div style="left:171.00px;top:534.00px;width:1393.00px;height:1.00px;background:#d4d4d4;"></div>
<div style="left:244.00px;top:518.00px;width:1.00px;height:16.00px;background:#e9e9e9;"></div>
<div style="left:321.00px;top:518.00px;width:1.00px;height:16.00px;background:#e9e9e9;"></div>
<div style="left:518.00px;top:518.00px;width:1.00px;height:16.00px;background:#e9e9e9;"></div>
<div style="left:582.00px;top:518.00px;width:1.00px;height:16.00px;background:#e9e9e9;"></div>
<div style="left:796.00px;top:518.00px;width:1.00px;height:16.00px;background:#e9e9e9;"></div>
<div style="left:863.00px;top:518.00px;width:1.00px;height:16.00px;background:#e9e9e9;"></div>
<div style="left:1049.00px;top:518.00px;width:1.00px;height:16.00px;background:#e9e9e9;"></div>
<div style="left:1097.00px;top:518.00px;width:1.00px;height:16.00px;background:#e9e9e9;"></div>
<div style="left:1175.00px;top:518.00px;width:1.00px;height:16.00px;background:#e9e9e9;"></div>
<div style="left:1373.00px;top:518.00px;width:1.00px;height:16.00px;background:#e9e9e9;"></div>
<div style="left:1474.00px;top:518.00px;width:1.00px;height:16.00px;background:#e9e9e9;"></div>
<div style="left:171.00px;top:535.00px;width:1393.00px;height:16.00px;background:#ffffff;"></div>
<div class="t" style="right:1513.70px;top:537.00px;font-size:11.15px;color:#252423;">17265778</div>
<div class="t" style="right:1436.60px;top:537.00px;font-size:11.15px;color:#252423;">0</div>
<div class="t" style="left:328.20px;top:536.00px;font-size:11.6px;color:#252423;">Reprocessor - recycling (qu19)</div>
<div class="t" style="left:525.10px;top:536.00px;font-size:11.6px;color:#252423;">UK</div>
<div class="t" style="left:589.50px;top:536.00px;font-size:11.6px;color:#252423;">Acetech</div>
<div class="t" style="right:894.80px;top:537.00px;font-size:11.15px;color:#252423;">41044</div>
<div class="t" style="left:870.00px;top:536.00px;font-size:11.6px;color:#252423;">Incinerator bottom ash</div>
<div class="t" style="right:660.60px;top:537.00px;font-size:11.15px;color:#252423;">2</div>
<div class="t" style="right:582.30px;top:537.00px;font-size:11.15px;color:#252423;">496.00</div>
<div class="t" style="left:1182.50px;top:536.00px;font-size:11.6px;color:#252423;">Metals from Incinerator Bottom Ash</div>
<div class="t" style="right:284.00px;top:537.00px;font-size:11.15px;color:#252423;">496.00</div>
<div style="left:171.00px;top:550.00px;width:1393.00px;height:1.00px;background:#d4d4d4;"></div>
<div style="left:244.00px;top:535.00px;width:1.00px;height:15.00px;background:#e9e9e9;"></div>
<div style="left:321.00px;top:535.00px;width:1.00px;height:15.00px;background:#e9e9e9;"></div>
<div style="left:518.00px;top:535.00px;width:1.00px;height:15.00px;background:#e9e9e9;"></div>
<div style="left:582.00px;top:535.00px;width:1.00px;height:15.00px;background:#e9e9e9;"></div>
<div style="left:796.00px;top:535.00px;width:1.00px;height:15.00px;background:#e9e9e9;"></div>
<div style="left:863.00px;top:535.00px;width:1.00px;height:15.00px;background:#e9e9e9;"></div>
<div style="left:1049.00px;top:535.00px;width:1.00px;height:15.00px;background:#e9e9e9;"></div>
<div style="left:1097.00px;top:535.00px;width:1.00px;height:15.00px;background:#e9e9e9;"></div>
<div style="left:1175.00px;top:535.00px;width:1.00px;height:15.00px;background:#e9e9e9;"></div>
<div style="left:1373.00px;top:535.00px;width:1.00px;height:15.00px;background:#e9e9e9;"></div>
<div style="left:1474.00px;top:535.00px;width:1.00px;height:15.00px;background:#e9e9e9;"></div>
<div style="left:171.00px;top:551.00px;width:1393.00px;height:17.00px;background:#ffffff;"></div>
<div style="left:322.00px;top:551.00px;width:853.00px;height:17.00px;background:#c8e2c2;"></div>
<div class="t" style="right:1513.70px;top:554.00px;font-size:11.15px;color:#252423;">17265841</div>
<div class="t" style="right:1436.60px;top:554.00px;font-size:11.15px;color:#252423;">17265768</div>
<div class="t" style="left:328.20px;top:553.00px;font-size:11.6px;color:#252423;">Final Destination</div>
<div class="t" style="left:525.10px;top:553.00px;font-size:11.6px;color:#252423;letter-spacing:0.6px;">---</div>
<div class="t" style="left:589.50px;top:553.00px;font-size:11.6px;color:#252423;letter-spacing:0.6px;">---</div>
<div class="t" style="right:894.80px;top:554.00px;font-size:11.15px;color:#252423;">0</div>
<div class="t" style="left:870.00px;top:553.00px;font-size:11.6px;color:#252423;">Incinerator bottom ash</div>
<div class="t" style="right:660.60px;top:554.00px;font-size:11.15px;color:#252423;">3</div>
<div class="t" style="right:582.30px;top:554.00px;font-size:11.15px;color:#252423;">221.98</div>
<div class="t" style="left:1182.50px;top:553.00px;font-size:11.6px;color:#252423;">Metals from Incinerator Bottom Ash</div>
<div class="t" style="right:284.00px;top:554.00px;font-size:11.15px;color:#252423;">221.98</div>
<div style="left:171.00px;top:567.00px;width:1393.00px;height:1.00px;background:#d4d4d4;"></div>
<div style="left:244.00px;top:551.00px;width:1.00px;height:16.00px;background:#e9e9e9;"></div>
<div style="left:321.00px;top:551.00px;width:1.00px;height:16.00px;background:#ddecda;"></div>
<div style="left:518.00px;top:551.00px;width:1.00px;height:16.00px;background:#ddecda;"></div>
<div style="left:582.00px;top:551.00px;width:1.00px;height:16.00px;background:#ddecda;"></div>
<div style="left:796.00px;top:551.00px;width:1.00px;height:16.00px;background:#ddecda;"></div>
<div style="left:863.00px;top:551.00px;width:1.00px;height:16.00px;background:#ddecda;"></div>
<div style="left:1049.00px;top:551.00px;width:1.00px;height:16.00px;background:#ddecda;"></div>
<div style="left:1097.00px;top:551.00px;width:1.00px;height:16.00px;background:#ddecda;"></div>
<div style="left:1175.00px;top:551.00px;width:1.00px;height:16.00px;background:#e9e9e9;"></div>
<div style="left:1373.00px;top:551.00px;width:1.00px;height:16.00px;background:#e9e9e9;"></div>
<div style="left:1474.00px;top:551.00px;width:1.00px;height:16.00px;background:#e9e9e9;"></div>
<div style="left:171.00px;top:568.00px;width:1393.00px;height:16.00px;background:#ffffff;"></div>
<div style="left:322.00px;top:568.00px;width:853.00px;height:16.00px;background:#c8e2c2;"></div>
<div class="t" style="right:1513.70px;top:570.00px;font-size:11.15px;color:#252423;">17265842</div>
<div class="t" style="right:1436.60px;top:570.00px;font-size:11.15px;color:#252423;">17265769</div>
<div class="t" style="left:328.20px;top:569.00px;font-size:11.6px;color:#252423;">Final Destination</div>
<div class="t" style="left:525.10px;top:569.00px;font-size:11.6px;color:#252423;letter-spacing:0.6px;">---</div>
<div class="t" style="left:589.50px;top:569.00px;font-size:11.6px;color:#252423;letter-spacing:0.6px;">---</div>
<div class="t" style="right:894.80px;top:570.00px;font-size:11.15px;color:#252423;">0</div>
<div class="t" style="left:870.00px;top:569.00px;font-size:11.6px;color:#252423;">Incinerator bottom ash</div>
<div class="t" style="right:660.60px;top:570.00px;font-size:11.15px;color:#252423;">3</div>
<div class="t" style="right:582.30px;top:570.00px;font-size:11.15px;color:#252423;">105.28</div>
<div class="t" style="left:1182.50px;top:569.00px;font-size:11.6px;color:#252423;">Metals from Incinerator Bottom Ash</div>
<div class="t" style="right:284.00px;top:570.00px;font-size:11.15px;color:#252423;">105.28</div>
<div style="left:171.00px;top:583.00px;width:1393.00px;height:1.00px;background:#d4d4d4;"></div>
<div style="left:244.00px;top:568.00px;width:1.00px;height:15.00px;background:#e9e9e9;"></div>
<div style="left:321.00px;top:568.00px;width:1.00px;height:15.00px;background:#ddecda;"></div>
<div style="left:518.00px;top:568.00px;width:1.00px;height:15.00px;background:#ddecda;"></div>
<div style="left:582.00px;top:568.00px;width:1.00px;height:15.00px;background:#ddecda;"></div>
<div style="left:796.00px;top:568.00px;width:1.00px;height:15.00px;background:#ddecda;"></div>
<div style="left:863.00px;top:568.00px;width:1.00px;height:15.00px;background:#ddecda;"></div>
<div style="left:1049.00px;top:568.00px;width:1.00px;height:15.00px;background:#ddecda;"></div>
<div style="left:1097.00px;top:568.00px;width:1.00px;height:15.00px;background:#ddecda;"></div>
<div style="left:1175.00px;top:568.00px;width:1.00px;height:15.00px;background:#e9e9e9;"></div>
<div style="left:1373.00px;top:568.00px;width:1.00px;height:15.00px;background:#e9e9e9;"></div>
<div style="left:1474.00px;top:568.00px;width:1.00px;height:15.00px;background:#e9e9e9;"></div>
<div style="left:171.00px;top:584.00px;width:1393.00px;height:17.00px;background:#ffffff;"></div>
<div style="left:322.00px;top:584.00px;width:853.00px;height:17.00px;background:#c8e2c2;"></div>
<div class="t" style="right:1513.70px;top:587.00px;font-size:11.15px;color:#252423;">17265843</div>
<div class="t" style="right:1436.60px;top:587.00px;font-size:11.15px;color:#252423;">17265770</div>
<div class="t" style="left:328.20px;top:586.00px;font-size:11.6px;color:#252423;">Final Destination</div>
<div class="t" style="left:525.10px;top:586.00px;font-size:11.6px;color:#252423;letter-spacing:0.6px;">---</div>
<div class="t" style="left:589.50px;top:586.00px;font-size:11.6px;color:#252423;letter-spacing:0.6px;">---</div>
<div class="t" style="right:894.80px;top:587.00px;font-size:11.15px;color:#252423;">0</div>
<div class="t" style="left:870.00px;top:586.00px;font-size:11.6px;color:#252423;">Incinerator bottom ash</div>
<div class="t" style="right:660.60px;top:587.00px;font-size:11.15px;color:#252423;">3</div>
<div class="t" style="right:582.30px;top:587.00px;font-size:11.15px;color:#252423;">73.06</div>
<div class="t" style="left:1182.50px;top:586.00px;font-size:11.6px;color:#252423;">Metals from Incinerator Bottom Ash</div>
<div class="t" style="right:284.00px;top:587.00px;font-size:11.15px;color:#252423;">73.06</div>
<div style="left:171.00px;top:600.00px;width:1393.00px;height:1.00px;background:#d4d4d4;"></div>
<div style="left:244.00px;top:584.00px;width:1.00px;height:16.00px;background:#e9e9e9;"></div>
<div style="left:321.00px;top:584.00px;width:1.00px;height:16.00px;background:#ddecda;"></div>
<div style="left:518.00px;top:584.00px;width:1.00px;height:16.00px;background:#ddecda;"></div>
<div style="left:582.00px;top:584.00px;width:1.00px;height:16.00px;background:#ddecda;"></div>
<div style="left:796.00px;top:584.00px;width:1.00px;height:16.00px;background:#ddecda;"></div>
<div style="left:863.00px;top:584.00px;width:1.00px;height:16.00px;background:#ddecda;"></div>
<div style="left:1049.00px;top:584.00px;width:1.00px;height:16.00px;background:#ddecda;"></div>
<div style="left:1097.00px;top:584.00px;width:1.00px;height:16.00px;background:#ddecda;"></div>
<div style="left:1175.00px;top:584.00px;width:1.00px;height:16.00px;background:#e9e9e9;"></div>
<div style="left:1373.00px;top:584.00px;width:1.00px;height:16.00px;background:#e9e9e9;"></div>
<div style="left:1474.00px;top:584.00px;width:1.00px;height:16.00px;background:#e9e9e9;"></div>
<div style="left:171.00px;top:601.00px;width:1393.00px;height:16.00px;background:#ffffff;"></div>
<div style="left:322.00px;top:601.00px;width:853.00px;height:16.00px;background:#c8e2c2;"></div>
<div class="t" style="right:1513.70px;top:603.00px;font-size:11.15px;color:#252423;">17265844</div>
<div class="t" style="right:1436.60px;top:603.00px;font-size:11.15px;color:#252423;">17265771</div>
<div class="t" style="left:328.20px;top:602.00px;font-size:11.6px;color:#252423;">Final Destination</div>
<div class="t" style="left:525.10px;top:602.00px;font-size:11.6px;color:#252423;letter-spacing:0.6px;">---</div>
<div class="t" style="left:589.50px;top:602.00px;font-size:11.6px;color:#252423;letter-spacing:0.6px;">---</div>
<div class="t" style="right:894.80px;top:603.00px;font-size:11.15px;color:#252423;">0</div>
<div class="t" style="left:870.00px;top:602.00px;font-size:11.6px;color:#252423;">Incinerator bottom ash</div>
<div class="t" style="right:660.60px;top:603.00px;font-size:11.15px;color:#252423;">3</div>
<div class="t" style="right:582.30px;top:603.00px;font-size:11.15px;color:#252423;">268.28</div>
<div class="t" style="left:1182.50px;top:602.00px;font-size:11.6px;color:#252423;">Metals from Incinerator Bottom Ash</div>
<div class="t" style="right:284.00px;top:603.00px;font-size:11.15px;color:#252423;">268.28</div>
<div style="left:171.00px;top:616.00px;width:1393.00px;height:1.00px;background:#d4d4d4;"></div>
<div style="left:244.00px;top:601.00px;width:1.00px;height:15.00px;background:#e9e9e9;"></div>
<div style="left:321.00px;top:601.00px;width:1.00px;height:15.00px;background:#ddecda;"></div>
<div style="left:518.00px;top:601.00px;width:1.00px;height:15.00px;background:#ddecda;"></div>
<div style="left:582.00px;top:601.00px;width:1.00px;height:15.00px;background:#ddecda;"></div>
<div style="left:796.00px;top:601.00px;width:1.00px;height:15.00px;background:#ddecda;"></div>
<div style="left:863.00px;top:601.00px;width:1.00px;height:15.00px;background:#ddecda;"></div>
<div style="left:1049.00px;top:601.00px;width:1.00px;height:15.00px;background:#ddecda;"></div>
<div style="left:1097.00px;top:601.00px;width:1.00px;height:15.00px;background:#ddecda;"></div>
<div style="left:1175.00px;top:601.00px;width:1.00px;height:15.00px;background:#e9e9e9;"></div>
<div style="left:1373.00px;top:601.00px;width:1.00px;height:15.00px;background:#e9e9e9;"></div>
<div style="left:1474.00px;top:601.00px;width:1.00px;height:15.00px;background:#e9e9e9;"></div>
<div style="left:171.00px;top:617.00px;width:1393.00px;height:17.00px;background:#ffffff;"></div>
<div style="left:322.00px;top:617.00px;width:853.00px;height:17.00px;background:#c8e2c2;"></div>
<div class="t" style="right:1513.70px;top:620.00px;font-size:11.15px;color:#252423;">17265845</div>
<div class="t" style="right:1436.60px;top:620.00px;font-size:11.15px;color:#252423;">17265772</div>
<div class="t" style="left:328.20px;top:619.00px;font-size:11.6px;color:#252423;">Final Destination</div>
<div class="t" style="left:525.10px;top:619.00px;font-size:11.6px;color:#252423;letter-spacing:0.6px;">---</div>
<div class="t" style="left:589.50px;top:619.00px;font-size:11.6px;color:#252423;letter-spacing:0.6px;">---</div>
<div class="t" style="right:894.80px;top:620.00px;font-size:11.15px;color:#252423;">0</div>
<div class="t" style="left:870.00px;top:619.00px;font-size:11.6px;color:#252423;">Incinerator bottom ash</div>
<div class="t" style="right:660.60px;top:620.00px;font-size:11.15px;color:#252423;">3</div>
<div class="t" style="right:582.30px;top:620.00px;font-size:11.15px;color:#252423;">1,949.21</div>
<div class="t" style="left:1182.50px;top:619.00px;font-size:11.6px;color:#252423;">Metals from Incinerator Bottom Ash</div>
<div class="t" style="right:284.00px;top:620.00px;font-size:11.15px;color:#252423;">1,949.21</div>
<div style="left:171.00px;top:633.00px;width:1393.00px;height:1.00px;background:#d4d4d4;"></div>
<div style="left:244.00px;top:617.00px;width:1.00px;height:16.00px;background:#e9e9e9;"></div>
<div style="left:321.00px;top:617.00px;width:1.00px;height:16.00px;background:#ddecda;"></div>
<div style="left:518.00px;top:617.00px;width:1.00px;height:16.00px;background:#ddecda;"></div>
<div style="left:582.00px;top:617.00px;width:1.00px;height:16.00px;background:#ddecda;"></div>
<div style="left:796.00px;top:617.00px;width:1.00px;height:16.00px;background:#ddecda;"></div>
<div style="left:863.00px;top:617.00px;width:1.00px;height:16.00px;background:#ddecda;"></div>
<div style="left:1049.00px;top:617.00px;width:1.00px;height:16.00px;background:#ddecda;"></div>
<div style="left:1097.00px;top:617.00px;width:1.00px;height:16.00px;background:#ddecda;"></div>
<div style="left:1175.00px;top:617.00px;width:1.00px;height:16.00px;background:#e9e9e9;"></div>
<div style="left:1373.00px;top:617.00px;width:1.00px;height:16.00px;background:#e9e9e9;"></div>
<div style="left:1474.00px;top:617.00px;width:1.00px;height:16.00px;background:#e9e9e9;"></div>
<div style="left:171.00px;top:634.00px;width:1393.00px;height:16.00px;background:#ffffff;"></div>
<div style="left:322.00px;top:634.00px;width:853.00px;height:16.00px;background:#c8e2c2;"></div>
<div class="t" style="right:1513.70px;top:636.00px;font-size:11.15px;color:#252423;">17265846</div>
<div class="t" style="right:1436.60px;top:636.00px;font-size:11.15px;color:#252423;">17265773</div>
<div class="t" style="left:328.20px;top:635.00px;font-size:11.6px;color:#252423;">Final Destination</div>
<div class="t" style="left:525.10px;top:635.00px;font-size:11.6px;color:#252423;letter-spacing:0.6px;">---</div>
<div class="t" style="left:589.50px;top:635.00px;font-size:11.6px;color:#252423;letter-spacing:0.6px;">---</div>
<div class="t" style="right:894.80px;top:636.00px;font-size:11.15px;color:#252423;">0</div>
<div class="t" style="left:870.00px;top:635.00px;font-size:11.6px;color:#252423;">Incinerator bottom ash</div>
<div class="t" style="right:660.60px;top:636.00px;font-size:11.15px;color:#252423;">3</div>
<div class="t" style="right:582.30px;top:636.00px;font-size:11.15px;color:#252423;">202.28</div>
<div class="t" style="left:1182.50px;top:635.00px;font-size:11.6px;color:#252423;">Metals from Incinerator Bottom Ash</div>
<div class="t" style="right:284.00px;top:636.00px;font-size:11.15px;color:#252423;">202.28</div>
<div style="left:171.00px;top:649.00px;width:1393.00px;height:1.00px;background:#d4d4d4;"></div>
<div style="left:244.00px;top:634.00px;width:1.00px;height:15.00px;background:#e9e9e9;"></div>
<div style="left:321.00px;top:634.00px;width:1.00px;height:15.00px;background:#ddecda;"></div>
<div style="left:518.00px;top:634.00px;width:1.00px;height:15.00px;background:#ddecda;"></div>
<div style="left:582.00px;top:634.00px;width:1.00px;height:15.00px;background:#ddecda;"></div>
<div style="left:796.00px;top:634.00px;width:1.00px;height:15.00px;background:#ddecda;"></div>
<div style="left:863.00px;top:634.00px;width:1.00px;height:15.00px;background:#ddecda;"></div>
<div style="left:1049.00px;top:634.00px;width:1.00px;height:15.00px;background:#ddecda;"></div>
<div style="left:1097.00px;top:634.00px;width:1.00px;height:15.00px;background:#ddecda;"></div>
<div style="left:1175.00px;top:634.00px;width:1.00px;height:15.00px;background:#e9e9e9;"></div>
<div style="left:1373.00px;top:634.00px;width:1.00px;height:15.00px;background:#e9e9e9;"></div>
<div style="left:1474.00px;top:634.00px;width:1.00px;height:15.00px;background:#e9e9e9;"></div>
<div style="left:171.00px;top:650.00px;width:1393.00px;height:17.00px;background:#ffffff;"></div>
<div style="left:322.00px;top:650.00px;width:853.00px;height:17.00px;background:#c8e2c2;"></div>
<div class="t" style="right:1513.70px;top:653.00px;font-size:11.15px;color:#252423;">17265847</div>
<div class="t" style="right:1436.60px;top:653.00px;font-size:11.15px;color:#252423;">17265774</div>
<div class="t" style="left:328.20px;top:652.00px;font-size:11.6px;color:#252423;">Final Destination</div>
<div class="t" style="left:525.10px;top:652.00px;font-size:11.6px;color:#252423;letter-spacing:0.6px;">---</div>
<div class="t" style="left:589.50px;top:652.00px;font-size:11.6px;color:#252423;letter-spacing:0.6px;">---</div>
<div class="t" style="right:894.80px;top:653.00px;font-size:11.15px;color:#252423;">0</div>
<div class="t" style="left:870.00px;top:652.00px;font-size:11.6px;color:#252423;">Incinerator bottom ash</div>
<div class="t" style="right:660.60px;top:653.00px;font-size:11.15px;color:#252423;">3</div>
<div class="t" style="right:582.30px;top:653.00px;font-size:11.15px;color:#252423;">24,200.52</div>
<div class="t" style="left:1182.50px;top:652.00px;font-size:11.6px;color:#252423;">Incinerator Bottom Ash</div>
<div class="t" style="right:284.00px;top:653.00px;font-size:11.15px;color:#252423;">24,200.52</div>
<div style="left:171.00px;top:666.00px;width:1393.00px;height:1.00px;background:#d4d4d4;"></div>
<div style="left:244.00px;top:650.00px;width:1.00px;height:16.00px;background:#e9e9e9;"></div>
<div style="left:321.00px;top:650.00px;width:1.00px;height:16.00px;background:#ddecda;"></div>
<div style="left:518.00px;top:650.00px;width:1.00px;height:16.00px;background:#ddecda;"></div>
<div style="left:582.00px;top:650.00px;width:1.00px;height:16.00px;background:#ddecda;"></div>
<div style="left:796.00px;top:650.00px;width:1.00px;height:16.00px;background:#ddecda;"></div>
<div style="left:863.00px;top:650.00px;width:1.00px;height:16.00px;background:#ddecda;"></div>
<div style="left:1049.00px;top:650.00px;width:1.00px;height:16.00px;background:#ddecda;"></div>
<div style="left:1097.00px;top:650.00px;width:1.00px;height:16.00px;background:#ddecda;"></div>
<div style="left:1175.00px;top:650.00px;width:1.00px;height:16.00px;background:#e9e9e9;"></div>
<div style="left:1373.00px;top:650.00px;width:1.00px;height:16.00px;background:#e9e9e9;"></div>
<div style="left:1474.00px;top:650.00px;width:1.00px;height:16.00px;background:#e9e9e9;"></div>
<div style="left:171.00px;top:667.00px;width:1393.00px;height:16.00px;background:#ffffff;"></div>
<div style="left:322.00px;top:667.00px;width:853.00px;height:16.00px;background:#c8e2c2;"></div>
<div class="t" style="right:1513.70px;top:669.00px;font-size:11.15px;color:#252423;">17265848</div>
<div class="t" style="right:1436.60px;top:669.00px;font-size:11.15px;color:#252423;">17265775</div>
<div class="t" style="left:328.20px;top:668.00px;font-size:11.6px;color:#252423;">Final Destination</div>
<div class="t" style="left:525.10px;top:668.00px;font-size:11.6px;color:#252423;letter-spacing:0.6px;">---</div>
<div class="t" style="left:589.50px;top:668.00px;font-size:11.6px;color:#252423;letter-spacing:0.6px;">---</div>
<div class="t" style="right:894.80px;top:669.00px;font-size:11.15px;color:#252423;">0</div>
<div class="t" style="left:870.00px;top:668.00px;font-size:11.6px;color:#252423;">Incinerator bottom ash</div>
<div class="t" style="right:660.60px;top:669.00px;font-size:11.15px;color:#252423;">3</div>
<div class="t" style="right:582.30px;top:669.00px;font-size:11.15px;color:#252423;">31,318.49</div>
<div class="t" style="left:1182.50px;top:668.00px;font-size:11.6px;color:#252423;">Incinerator Bottom Ash</div>
<div class="t" style="right:284.00px;top:669.00px;font-size:11.15px;color:#252423;">31,318.49</div>
<div style="left:171.00px;top:682.00px;width:1393.00px;height:1.00px;background:#d4d4d4;"></div>
<div style="left:244.00px;top:667.00px;width:1.00px;height:15.00px;background:#e9e9e9;"></div>
<div style="left:321.00px;top:667.00px;width:1.00px;height:15.00px;background:#ddecda;"></div>
<div style="left:518.00px;top:667.00px;width:1.00px;height:15.00px;background:#ddecda;"></div>
<div style="left:582.00px;top:667.00px;width:1.00px;height:15.00px;background:#ddecda;"></div>
<div style="left:796.00px;top:667.00px;width:1.00px;height:15.00px;background:#ddecda;"></div>
<div style="left:863.00px;top:667.00px;width:1.00px;height:15.00px;background:#ddecda;"></div>
<div style="left:1049.00px;top:667.00px;width:1.00px;height:15.00px;background:#ddecda;"></div>
<div style="left:1097.00px;top:667.00px;width:1.00px;height:15.00px;background:#ddecda;"></div>
<div style="left:1175.00px;top:667.00px;width:1.00px;height:15.00px;background:#e9e9e9;"></div>
<div style="left:1373.00px;top:667.00px;width:1.00px;height:15.00px;background:#e9e9e9;"></div>
<div style="left:1474.00px;top:667.00px;width:1.00px;height:15.00px;background:#e9e9e9;"></div>
<div style="left:171.00px;top:683.00px;width:1393.00px;height:17.00px;background:#ffffff;"></div>
<div style="left:322.00px;top:683.00px;width:853.00px;height:17.00px;background:#c8e2c2;"></div>
<div class="t" style="right:1513.70px;top:686.00px;font-size:11.15px;color:#252423;">17265849</div>
<div class="t" style="right:1436.60px;top:686.00px;font-size:11.15px;color:#252423;">17265776</div>
<div class="t" style="left:328.20px;top:685.00px;font-size:11.6px;color:#252423;">Final Destination</div>
<div class="t" style="left:525.10px;top:685.00px;font-size:11.6px;color:#252423;letter-spacing:0.6px;">---</div>
<div class="t" style="left:589.50px;top:685.00px;font-size:11.6px;color:#252423;letter-spacing:0.6px;">---</div>
<div class="t" style="right:894.80px;top:686.00px;font-size:11.15px;color:#252423;">0</div>
<div class="t" style="left:870.00px;top:685.00px;font-size:11.6px;color:#252423;">Incinerator bottom ash</div>
<div class="t" style="right:660.60px;top:686.00px;font-size:11.15px;color:#252423;">3</div>
<div class="t" style="right:582.30px;top:686.00px;font-size:11.15px;color:#252423;">4,929.61</div>
<div class="t" style="left:1182.50px;top:685.00px;font-size:11.6px;color:#252423;">Metals from Incinerator Bottom Ash</div>
<div class="t" style="right:284.00px;top:686.00px;font-size:11.15px;color:#252423;">4,929.61</div>
<div style="left:171.00px;top:699.00px;width:1393.00px;height:1.00px;background:#d4d4d4;"></div>
<div style="left:244.00px;top:683.00px;width:1.00px;height:16.00px;background:#e9e9e9;"></div>
<div style="left:321.00px;top:683.00px;width:1.00px;height:16.00px;background:#ddecda;"></div>
<div style="left:518.00px;top:683.00px;width:1.00px;height:16.00px;background:#ddecda;"></div>
<div style="left:582.00px;top:683.00px;width:1.00px;height:16.00px;background:#ddecda;"></div>
<div style="left:796.00px;top:683.00px;width:1.00px;height:16.00px;background:#ddecda;"></div>
<div style="left:863.00px;top:683.00px;width:1.00px;height:16.00px;background:#ddecda;"></div>
<div style="left:1049.00px;top:683.00px;width:1.00px;height:16.00px;background:#ddecda;"></div>
<div style="left:1097.00px;top:683.00px;width:1.00px;height:16.00px;background:#ddecda;"></div>
<div style="left:1175.00px;top:683.00px;width:1.00px;height:16.00px;background:#e9e9e9;"></div>
<div style="left:1373.00px;top:683.00px;width:1.00px;height:16.00px;background:#e9e9e9;"></div>
<div style="left:1474.00px;top:683.00px;width:1.00px;height:16.00px;background:#e9e9e9;"></div>
<div style="left:171.00px;top:700.00px;width:1393.00px;height:16.00px;background:#ffffff;"></div>
<div style="left:322.00px;top:700.00px;width:853.00px;height:16.00px;background:#c8e2c2;"></div>
<div class="t" style="right:1513.70px;top:702.00px;font-size:11.15px;color:#252423;">17265850</div>
<div class="t" style="right:1436.60px;top:702.00px;font-size:11.15px;color:#252423;">17265777</div>
<div class="t" style="left:328.20px;top:701.00px;font-size:11.6px;color:#252423;">Final Destination</div>
<div class="t" style="left:525.10px;top:701.00px;font-size:11.6px;color:#252423;letter-spacing:0.6px;">---</div>
<div class="t" style="left:589.50px;top:701.00px;font-size:11.6px;color:#252423;letter-spacing:0.6px;">---</div>
<div class="t" style="right:894.80px;top:702.00px;font-size:11.15px;color:#252423;">0</div>
<div class="t" style="left:870.00px;top:701.00px;font-size:11.6px;color:#252423;">Incinerator bottom ash</div>
<div class="t" style="right:660.60px;top:702.00px;font-size:11.15px;color:#252423;">3</div>
<div class="t" style="right:582.30px;top:702.00px;font-size:11.15px;color:#252423;">699.16</div>
<div class="t" style="left:1182.50px;top:701.00px;font-size:11.6px;color:#252423;">Metals from Incinerator Bottom Ash</div>
<div class="t" style="right:284.00px;top:702.00px;font-size:11.15px;color:#252423;">699.16</div>
<div style="left:171.00px;top:715.00px;width:1393.00px;height:1.00px;background:#d4d4d4;"></div>
<div style="left:244.00px;top:700.00px;width:1.00px;height:15.00px;background:#e9e9e9;"></div>
<div style="left:321.00px;top:700.00px;width:1.00px;height:15.00px;background:#ddecda;"></div>
<div style="left:518.00px;top:700.00px;width:1.00px;height:15.00px;background:#ddecda;"></div>
<div style="left:582.00px;top:700.00px;width:1.00px;height:15.00px;background:#ddecda;"></div>
<div style="left:796.00px;top:700.00px;width:1.00px;height:15.00px;background:#ddecda;"></div>
<div style="left:863.00px;top:700.00px;width:1.00px;height:15.00px;background:#ddecda;"></div>
<div style="left:1049.00px;top:700.00px;width:1.00px;height:15.00px;background:#ddecda;"></div>
<div style="left:1097.00px;top:700.00px;width:1.00px;height:15.00px;background:#ddecda;"></div>
<div style="left:1175.00px;top:700.00px;width:1.00px;height:15.00px;background:#e9e9e9;"></div>
<div style="left:1373.00px;top:700.00px;width:1.00px;height:15.00px;background:#e9e9e9;"></div>
<div style="left:1474.00px;top:700.00px;width:1.00px;height:15.00px;background:#e9e9e9;"></div>
<div style="left:171.00px;top:716.00px;width:1393.00px;height:16.00px;background:#ffffff;"></div>
<div style="left:322.00px;top:716.00px;width:853.00px;height:16.00px;background:#c8e2c2;"></div>
<div class="t" style="right:1513.70px;top:720.00px;font-size:11.15px;color:#252423;">17265851</div>
<div class="t" style="right:1436.60px;top:720.00px;font-size:11.15px;color:#252423;">17265778</div>
<div class="t" style="left:328.20px;top:719.00px;font-size:11.6px;color:#252423;">Final Destination</div>
<div class="t" style="left:525.10px;top:719.00px;font-size:11.6px;color:#252423;letter-spacing:0.6px;">---</div>
<div class="t" style="left:589.50px;top:719.00px;font-size:11.6px;color:#252423;letter-spacing:0.6px;">---</div>
<div class="t" style="right:894.80px;top:720.00px;font-size:11.15px;color:#252423;">0</div>
<div class="t" style="left:870.00px;top:719.00px;font-size:11.6px;color:#252423;">Incinerator bottom ash</div>
<div class="t" style="right:660.60px;top:720.00px;font-size:11.15px;color:#252423;">3</div>
<div class="t" style="right:582.30px;top:720.00px;font-size:11.15px;color:#252423;">496.00</div>
<div class="t" style="left:1182.50px;top:719.00px;font-size:11.6px;color:#252423;">Metals from Incinerator Bottom Ash</div>
<div class="t" style="right:284.00px;top:720.00px;font-size:11.15px;color:#252423;">496.00</div>
<div style="left:244.00px;top:716.00px;width:1.00px;height:15.00px;background:#e9e9e9;"></div>
<div style="left:321.00px;top:716.00px;width:1.00px;height:15.00px;background:#ddecda;"></div>
<div style="left:518.00px;top:716.00px;width:1.00px;height:15.00px;background:#ddecda;"></div>
<div style="left:582.00px;top:716.00px;width:1.00px;height:15.00px;background:#ddecda;"></div>
<div style="left:796.00px;top:716.00px;width:1.00px;height:15.00px;background:#ddecda;"></div>
<div style="left:863.00px;top:716.00px;width:1.00px;height:15.00px;background:#ddecda;"></div>
<div style="left:1049.00px;top:716.00px;width:1.00px;height:15.00px;background:#ddecda;"></div>
<div style="left:1097.00px;top:716.00px;width:1.00px;height:15.00px;background:#ddecda;"></div>
<div style="left:1175.00px;top:716.00px;width:1.00px;height:15.00px;background:#e9e9e9;"></div>
<div style="left:1373.00px;top:716.00px;width:1.00px;height:15.00px;background:#e9e9e9;"></div>
<div style="left:1474.00px;top:716.00px;width:1.00px;height:15.00px;background:#e9e9e9;"></div>
<div style="left:1604.00px;top:626.00px;width:116.00px;height:138.00px;background:#e1ecf7;"></div>
<svg style="position:absolute;left:1600px;top:620px" width="120" height="100"><path d="M61.1 14.9L29 45.9L61.1 82M29.6 45.9H97.7" fill="none" stroke="#5e6166" stroke-width="2.3"/></svg>
<div class="t" style="left:1662.20px;top:734.00px;font-size:11.3px;color:#6e6e6e;transform:translateX(-50%);">Back to Waste</div>
<div class="t" style="left:1662.20px;top:749.00px;font-size:11.3px;color:#6e6e6e;transform:translateX(-50%);">Stream summary</div>
<div style="left:0.00px;top:916.00px;width:1752.00px;height:59.00px;background:#efefef;"></div>
</body></html>
